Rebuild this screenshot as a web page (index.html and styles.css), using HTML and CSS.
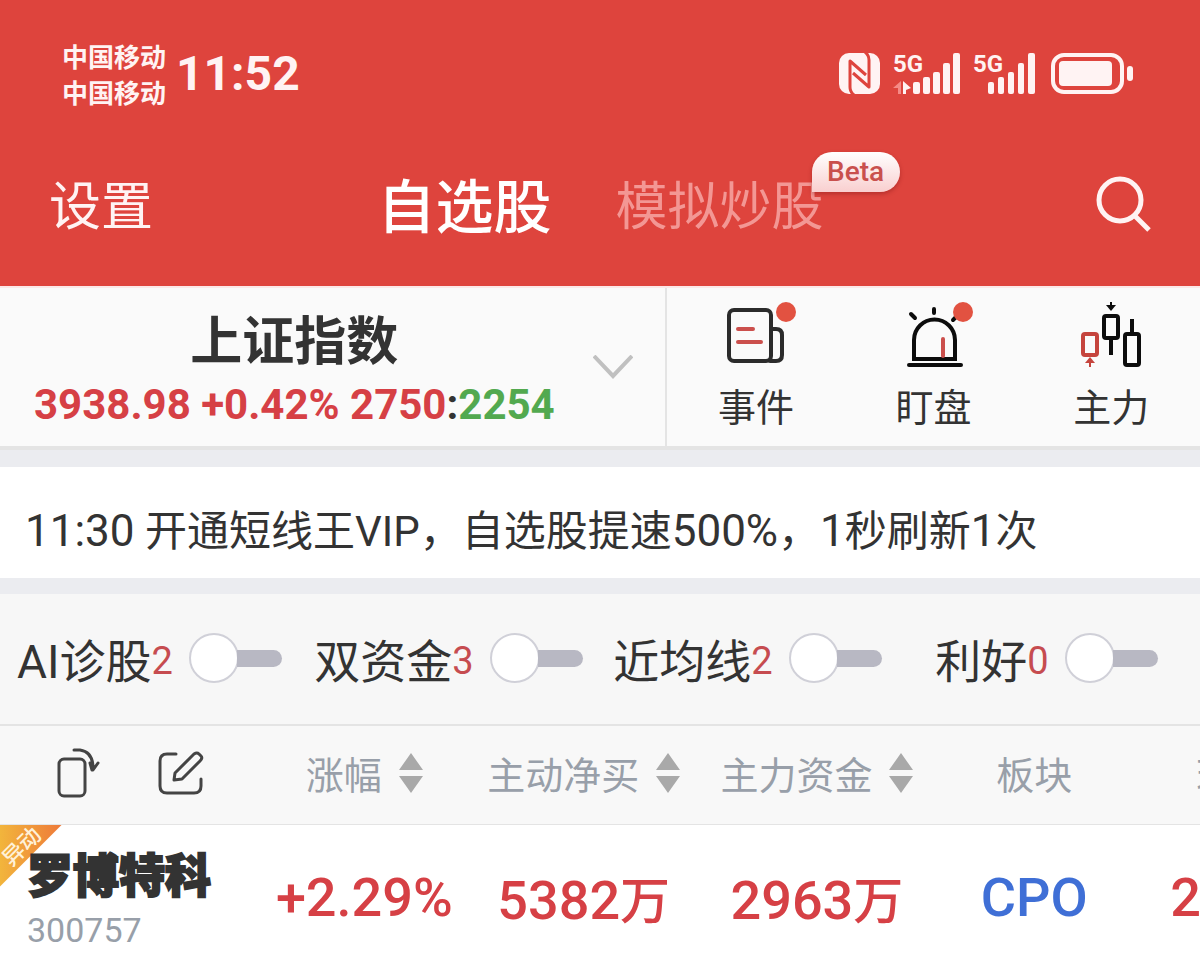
FILE: index.html
```html
<!DOCTYPE html>
<html lang="zh-CN">
<head>
    <meta charset="UTF-8">
    <meta name="viewport" content="width=device-width, initial-scale=1.0">
    <title>自选股</title>
    <link rel="stylesheet" href="styles.css">
</head>
<body>
    <header class="top">
        <!-- 状态栏 -->
        <div class="status">
            <div class="carrier">
                <span>中国移动</span>
                <span>中国移动</span>
            </div>
            <span class="time">11:52</span>
            <div class="status-icons">
                <svg class="nfc" width="42" height="42" viewBox="0 0 42 42">
                    <rect x="0" y="0" width="41" height="41" rx="10" fill="#fff3f3"/>
                    <path d="M15 42 Q11 39 11 34 V8 L27 22 M26 -1 Q30 2 30 7 V34 L14 20" fill="none" stroke="#de443d" stroke-width="3" stroke-linejoin="round"/>
                </svg>
                <svg class="signal" width="68" height="42" viewBox="0 0 68 42">
                    <text x="0" y="19">5G</text>
                    <path d="M8 28 V41 H5 V35 H0 Z" fill="#f58a86"/>
                    <path d="M10 28 L18 35 L13 37 V41 H10 Z"/>
                    <rect x="20" y="29" width="7" height="12" rx="2"/>
                    <rect x="30" y="24" width="7" height="17" rx="2"/>
                    <rect x="40" y="19" width="7" height="22" rx="2"/>
                    <rect x="50" y="10" width="7" height="31" rx="2"/>
                    <rect x="60" y="0" width="7" height="41" rx="2"/>
                </svg>
                <svg class="signal" width="62" height="42" viewBox="0 0 62 42">
                    <text x="0" y="19">5G</text>
                    <rect x="15" y="29" width="6" height="12" rx="2"/>
                    <rect x="25" y="24" width="6" height="17" rx="2"/>
                    <rect x="35" y="19" width="6" height="22" rx="2"/>
                    <rect x="45" y="10" width="6" height="31" rx="2"/>
                    <rect x="55" y="0" width="7" height="41" rx="2"/>
                </svg>
                <svg class="battery" width="82" height="42" viewBox="0 0 82 42">
                    <rect x="2" y="2" width="69" height="37" rx="11" fill="none" stroke="#fff3f3" stroke-width="4"/>
                    <rect x="8" y="8" width="53" height="25" rx="4" fill="#fff3f3"/>
                    <rect x="76" y="13" width="6" height="15" rx="3" fill="#fff3f3"/>
                </svg>
            </div>
        </div>

        <!-- 导航 -->
        <nav class="nav">
            <a href="#" class="settings">设置</a>
            <div class="tabs">
                <a href="#" class="tab active">自选股</a>
                <a href="#" class="tab">模拟炒股<span class="beta">Beta</span></a>
            </div>
            <button type="button" class="search" aria-label="搜索">
                <svg width="56" height="56" viewBox="0 0 56 56" fill="none" stroke="#fff3f3">
                    <circle cx="24" cy="24" r="21" stroke-width="5"/>
                    <path d="M38 39 L53 54" stroke-width="5"/>
                </svg>
            </button>
        </nav>
    </header>

    <main>
        <!-- 大盘指数 -->
        <section class="index-bar">
            <div class="index-info">
                <div class="index-text">
                    <h1>上证指数</h1>
                    <p class="index-data"><span class="up">3938.98 +0.42% 2750</span>:<span class="down">2254</span></p>
                </div>
                <button type="button" class="expand" aria-label="展开">
                    <svg width="40" height="24" viewBox="0 0 40 24" fill="none" stroke="#c0c0c0" stroke-width="4">
                        <path d="M1 1 L20 21 L39 1"/>
                    </svg>
                </button>
            </div>
            <div class="shortcuts">
                <a href="#" class="shortcut">
                    <svg width="80" height="70" viewBox="0 0 80 70" fill="none" stroke="#2b2b2b" stroke-width="4" stroke-linecap="round">
                        <rect x="13" y="10" width="42" height="51" rx="5"/>
                        <path d="M55 29 H60 Q66 29 66 35 V55 Q66 61 60 61 H54"/>
                        <path d="M22 29 H37 M22 42 H45" stroke="#cb4f4c"/>
                        <circle cx="70" cy="12" r="10" fill="#e25241" stroke="none"/>
                    </svg>
                    <span>事件</span>
                </a>
                <a href="#" class="shortcut">
                    <svg width="80" height="70" viewBox="0 0 80 70" fill="none" stroke="#0c0c0c" stroke-width="4" stroke-linecap="round">
                        <path d="M20 59 V40 A20 20 0 0 1 61 40 V59 Z"/>
                        <path d="M15 65 H67"/>
                        <path d="M17 14 L21 18 M40 9 V13 M59 20 L62 17"/>
                        <path d="M49 39 V56" stroke="#cb4f4c"/>
                        <circle cx="69" cy="12" r="10" fill="#e25241" stroke="none"/>
                    </svg>
                    <span>盯盘</span>
                </a>
                <a href="#" class="shortcut">
                    <svg width="80" height="70" viewBox="0 0 80 70" fill="none" stroke="#0c0c0c" stroke-width="4">
                        <g stroke="#c5443d">
                            <rect x="12" y="34" width="14" height="21" rx="2"/>
                            <path d="M19 61 V67" stroke-width="2"/>
                            <path d="M19 57 L24 63 H14 Z" fill="#c5443d" stroke="none"/>
                        </g>
                        <rect x="33" y="16" width="14" height="22" rx="2"/>
                        <path d="M40 38 V55"/>
                        <path d="M40 2 V7" stroke-width="2"/>
                        <path d="M40 11 L45 5 H35 Z" fill="#0c0c0c" stroke="none"/>
                        <rect x="54" y="34" width="14" height="31" rx="2"/>
                        <path d="M61 34 V19"/>
                    </svg>
                    <span>主力</span>
                </a>
            </div>
        </section>

        <!-- 公告 -->
        <section class="news">
            <a href="#"><span class="num">11:30</span> 开通短线王VIP，自选股提速<span class="num">500%</span>，<span class="num">1</span>秒刷新<span class="num">1</span>次</a>
        </section>

        <!-- 筛选开关 -->
        <section class="filters">
            <label class="filter">AI诊股<span class="count">2</span><input type="checkbox" class="switch"></label>
            <label class="filter">双资金<span class="count">3</span><input type="checkbox" class="switch"></label>
            <label class="filter">近均线<span class="count">2</span><input type="checkbox" class="switch"></label>
            <label class="filter">利好<span class="count">0</span><input type="checkbox" class="switch"></label>
        </section>

        <!-- 股票列表 -->
        <div class="stocks-wrap">
            <table class="stocks">
                <colgroup>
                    <col class="col-name">
                    <col class="col-change">
                    <col class="col-net">
                    <col class="col-fund">
                    <col class="col-sector">
                    <col class="col-price">
                </colgroup>
                <thead>
                    <tr>
                        <th>
                            <div class="tools">
                                <button type="button" aria-label="横屏">
                                    <svg width="46" height="50" viewBox="0 0 46 50" fill="none" stroke="#444" stroke-width="3" stroke-linecap="round" stroke-linejoin="round">
                                        <rect x="3" y="11" width="26" height="37" rx="5"/>
                                        <path d="M18 2 H24 Q37 4 37 20 M36 22 L34 15 M37 22 L42 15"/>
                                    </svg>
                                </button>
                                <button type="button" aria-label="编辑">
                                    <svg width="46" height="50" viewBox="0 0 46 50" fill="none" stroke="#444" stroke-width="3" stroke-linecap="round" stroke-linejoin="round">
                                        <path d="M18 6 H9 Q2 6 2 13 V38 Q2 45 9 45 H36 Q43 45 43 38 V31"/>
                                        <path d="M16 32 L17 25 L36 6 Q39 4 41 6 L43 8 Q45 10 42 13 L24 31 Z"/>
                                    </svg>
                                </button>
                            </div>
                        </th>
                        <th><button type="button" class="sort">涨幅<svg width="24" height="40" viewBox="0 0 24 40" fill="#a9a9a9"><path d="M12 0 L24 17 H0 Z M0 23 H24 L12 40 Z"/></svg></button></th>
                        <th><button type="button" class="sort">主动净买<svg width="24" height="40" viewBox="0 0 24 40" fill="#a9a9a9"><path d="M12 0 L24 17 H0 Z M0 23 H24 L12 40 Z"/></svg></button></th>
                        <th><button type="button" class="sort">主力资金<svg width="24" height="40" viewBox="0 0 24 40" fill="#a9a9a9"><path d="M12 0 L24 17 H0 Z M0 23 H24 L12 40 Z"/></svg></button></th>
                        <th>板块</th>
                        <th><button type="button" class="sort">现价<svg width="24" height="40" viewBox="0 0 24 40" fill="#a9a9a9"><path d="M12 0 L24 17 H0 Z M0 23 H24 L12 40 Z"/></svg></button></th>
                    </tr>
                </thead>
                <tbody>
                    <tr>
                        <td class="name-cell">
                            <span class="ribbon"><span>异动</span></span>
                            <strong>罗博特科</strong>
                            <small>300757</small>
                        </td>
                        <td class="value">+2.29%</td>
                        <td class="value">5382<span class="unit">万</span></td>
                        <td class="value">2963<span class="unit">万</span></td>
                        <td class="value sector"><a href="#">CPO</a></td>
                        <td class="value">292.00</td>
                    </tr>
                </tbody>
            </table>
        </div>
    </main>
</body>
</html>
```
FILE: styles.css
```css
*, *::before, *::after {
    box-sizing: border-box;
}

body {
    margin: 0;
    font-family: Roboto, "Noto Sans CJK SC", sans-serif;
    background: #fff;
    color: #333;
    overflow-x: hidden;
}

a {
    color: inherit;
    text-decoration: none;
}

button {
    padding: 0;
    border: none;
    background: none;
    font: inherit;
    color: inherit;
    cursor: pointer;
}

svg {
    display: block;
    flex: none;
}

h1, p {
    margin: 0;
}

/* 顶部 */
.top {
    background: #de443d;
    color: #fff3f3;
    padding: 36px 48px 40px 49px;
}

.status {
    display: flex;
    align-items: center;
    padding: 0 19px 0 13px;
}

.carrier {
    display: flex;
    flex-direction: column;
    padding-top: 4px;
    font-size: 26px;
    line-height: 36px;
    font-weight: bold;
}

.time {
    margin-left: 10px;
    font-size: 48px;
    line-height: 72px;
    font-weight: bold;
}

.status-icons {
    display: flex;
    align-items: center;
    margin-left: auto;
}

.signal {
    margin-left: 12px;
    fill: #fff3f3;
    font-size: 24px;
    font-weight: bold;
    overflow: visible;
}

.battery {
    margin-left: 16px;
}

.nav {
    display: grid;
    grid-template-columns: 1fr auto 1fr;
    align-items: center;
    height: 84px;
    margin-top: 50px;
}

.settings {
    font-size: 52px;
    line-height: 76px;
    padding-top: 8px;
}

.tabs {
    display: flex;
    align-items: center;
    gap: 64px;
    padding-top: 8px;
}

.tab {
    position: relative;
    font-size: 52px;
    line-height: 76px;
    color: #f39794;
}

.tab.active {
    font-size: 58px;
    font-weight: 500;
    color: #fff;
}

.beta {
    position: absolute;
    left: 196px;
    top: -18px;
    width: 88px;
    height: 40px;
    border-radius: 20px 20px 20px 0;
    background: linear-gradient(#fff, #f9cfcf);
    box-shadow: 0 2px 4px rgba(120, 20, 20, 0.4);
    color: #c9504d;
    font-size: 28px;
    font-weight: 500;
    line-height: 40px;
    text-align: center;
}

.search {
    justify-self: end;
}

/* 指数 */
.index-bar {
    display: flex;
    background: #fafafa;
    border-top: 2px solid #fbe8e8;
    border-bottom: 4px solid #e4e4e4;
}

.index-info {
    display: flex;
    align-items: center;
    flex: 0 0 auto;
    width: 55.6%;
    padding: 0 32px 0 34px;
    border-right: 2px solid #e4e4e4;
}

.index-text {
    padding-top: 8px;
    text-align: center;
}

.index-text h1 {
    font-size: 52px;
    line-height: 68px;
}

.index-data {
    font-size: 42px;
    line-height: 56px;
    font-weight: bold;
    white-space: nowrap;
}

.up {
    color: #d64045;
}

.down {
    color: #52a94f;
}

.expand {
    margin-left: auto;
}

.shortcuts {
    flex: 1;
    display: grid;
    grid-template-columns: repeat(3, 1fr);
}

.shortcut {
    display: flex;
    flex-direction: column;
    align-items: center;
    gap: 8px;
    padding: 12px 0 8px;
    font-size: 38px;
    line-height: 60px;
}

/* 公告 */
.news {
    padding: 29px 25px 11px;
    border-top: 17px solid #ebecf0;
    border-bottom: 16px solid #ebecf0;
    font-size: 42px;
    line-height: 71px;
    white-space: nowrap;
}

.news .num {
    font-size: 44px;
}

/* 筛选 */
.filters {
    display: grid;
    grid-template-columns: repeat(4, 1fr);
    padding-right: 4px;
    background: #f7f7f7;
    border-bottom: 2px solid #e4e4e4;
}

.filter {
    display: flex;
    align-items: center;
    justify-content: center;
    height: 130px;
    padding-bottom: 2px;
    font-size: 46px;
    white-space: nowrap;
}

.count {
    padding-top: 6px;
    font-size: 38px;
    color: #c64c50;
}

.switch {
    appearance: none;
    display: flex;
    align-items: center;
    width: 93px;
    height: 50px;
    margin: 0 0 0 16px;
}

.switch::before {
    content: "";
    width: 50px;
    height: 50px;
    border: 2px solid #d0d0d8;
    border-radius: 50%;
    background: #fff;
}

.switch::after {
    content: "";
    flex: 1;
    height: 17px;
    margin-left: -2px;
    border-radius: 0 9px 9px 0;
    background: #b8b8c3;
}

.switch:checked {
    flex-direction: row-reverse;
}

/* 列表 */
.stocks-wrap {
    overflow: hidden;
}

.stocks {
    width: 115%;
    table-layout: fixed;
    border-collapse: collapse;
}

.col-name {
    width: 18.5%;
}

.col-change {
    width: 15.8%;
}

.col-net {
    width: 16%;
}

.col-fund {
    width: 17.8%;
}

.col-sector {
    width: 13.7%;
}

.stocks th {
    height: 98px;
    padding: 0 0 4px;
    background: #f8f8f8;
    border-bottom: 1px solid #e4e4e4;
    color: #989fa9;
    font-size: 38px;
    font-weight: normal;
}

.stocks td {
    padding: 0;
    height: 138px;
    white-space: nowrap;
}

.tools {
    display: flex;
    gap: 56px;
    padding-left: 56px;
}

.sort {
    display: inline-flex;
    align-items: center;
    gap: 17px;
    vertical-align: middle;
}

.stocks .name-cell {
    position: relative;
    padding: 18px 0 0 27px;
    vertical-align: top;
}

.name-cell strong {
    position: relative;
    display: block;
    font-size: 46px;
    line-height: 66px;
    font-weight: 900;
    -webkit-text-stroke: 2px #333;
}

.name-cell small {
    display: block;
    font-size: 34px;
    line-height: 42px;
    color: #989fa9;
}

.ribbon {
    position: absolute;
    left: 0;
    top: 0;
    width: 62px;
    height: 62px;
    background: linear-gradient(90deg, #f2b53c, #ee7a3a);
    clip-path: polygon(0 0, 100% 0, 0 100%);
    color: #fff1d8;
    font-size: 22px;
    font-weight: 500;
    line-height: 24px;
}

.ribbon span {
    display: block;
    width: 44px;
    margin-top: 10px;
    transform: rotate(-45deg);
    text-align: center;
}

.stocks .value {
    padding-top: 8px;
    font-size: 54px;
    font-weight: 500;
    text-align: center;
    color: #d64045;
}

.value .unit {
    font-size: 50px;
}

.stocks .sector {
    color: #3f6fd6;
}
```
